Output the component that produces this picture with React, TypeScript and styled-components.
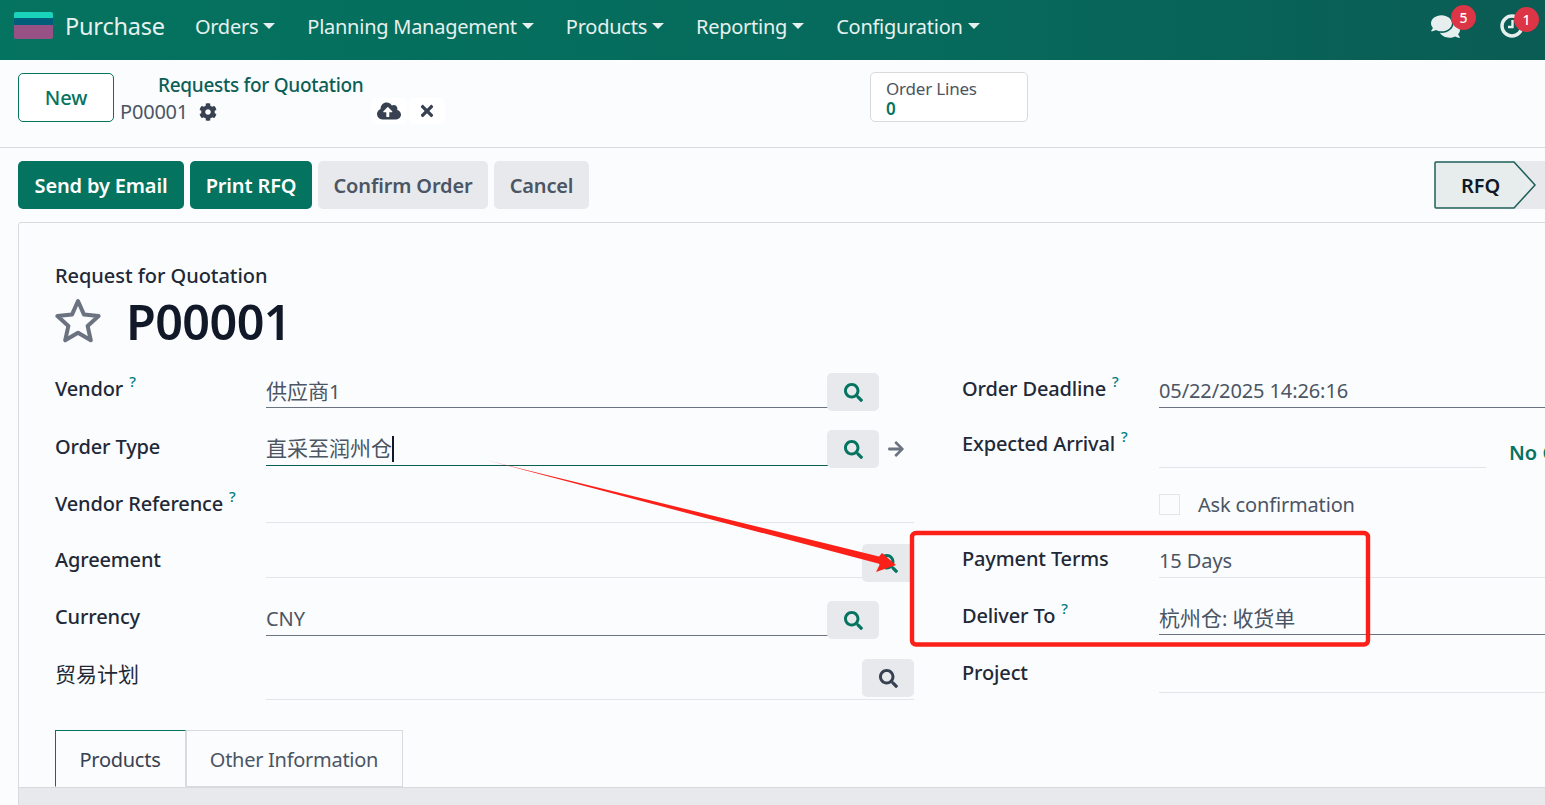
import React from 'react';
import styled, { createGlobalStyle } from 'styled-components';
import {
  FaArrowRight,
  FaCloudUploadAlt,
  FaCog,
  FaComments,
  FaSearch,
  FaTimes,
} from 'react-icons/fa';

const GlobalStyle = createGlobalStyle`
  html, body {
    margin: 0;
    padding: 0;
    background: #f9fafb;
  }
  body {
    font-family: "Noto Sans", "Noto Sans CJK SC", sans-serif;
    color: #1f2937;
  }
`;

const Page = styled.div`
  width: 1545px;
  height: 805px;
  overflow: hidden;
  position: relative;
  background: #fbfcfe;
`;

const NavBar = styled.nav`
  height: 60px;
  box-sizing: border-box;
  display: flex;
  align-items: center;
  padding: 0 0 8px 14px;
  background: linear-gradient(90deg, #04735f 0%, #066a5c 60%, #0a5c54 100%);
  color: #e6f1ef;
`;

const LogoWrap = styled.span`
  display: flex;
  margin-bottom: 2px;
`;

const AppName = styled.span`
  font-size: 23.5px;
  margin-left: 12px;
  margin-right: 30px;
  letter-spacing: -0.2px;
`;

const NavItem = styled.span`
  display: flex;
  align-items: center;
  font-size: 20px;
  letter-spacing: -0.25px;
  margin-right: 32px;
  &::after {
    content: '';
    margin-left: 5px;
    border-top: 6px solid currentColor;
    border-left: 6px solid transparent;
    border-right: 6px solid transparent;
  }
`;

const NavIcons = styled.div`
  margin-left: auto;
  display: flex;
  align-items: center;
  gap: 40px;
  padding-right: 21px;
`;

const NavIcon = styled.span`
  position: relative;
  display: flex;
  font-size: 29px;
  color: #e6eeee;
`;

const Badge = styled.span<{ $left: number }>`
  position: absolute;
  top: -7px;
  left: ${(p) => p.$left}px;
  width: 25px;
  height: 25px;
  border-radius: 50%;
  background: #dc3545;
  color: #fff;
  font-size: 14px;
  font-weight: 500;
  display: flex;
  align-items: center;
  justify-content: center;
`;

const ControlPanel = styled.div`
  height: 88px;
  box-sizing: border-box;
  border-bottom: 1px solid #d8dadd;
  display: flex;
  padding: 12px 18px 0;
`;

const NewButton = styled.button`
  width: 96px;
  height: 49px;
  margin-top: 1px;
  background: #fff;
  border: 1px solid #04735f;
  border-radius: 5px;
  color: #04735f;
  font: 500 20px "Noto Sans", sans-serif;
  letter-spacing: -0.1px;
`;

const Breadcrumbs = styled.div`
  width: 749px;
  padding-left: 7px;
  position: relative;
`;

const Crumb = styled.div`
  margin: 0 0 1px 37px;
  font-size: 19px;
  font-weight: 500;
  letter-spacing: -0.3px;
  line-height: 26px;
  color: #0b5f57;
`;

const CurrentRecord = styled.div`
  display: flex;
  align-items: center;
  font-size: 20px;
  line-height: 26px;
  letter-spacing: -0.2px;
  color: #4b5563;
  margin-left: -1px;
  svg {
    margin-left: 11px;
    color: #374151;
    font-size: 18px;
  }
`;

const SaveActions = styled.div`
  position: absolute;
  left: 257px;
  top: 26px;
  display: flex;
  gap: 2px;
`;

const SaveAction = styled.span<{ $width: number }>`
  width: ${(p) => p.$width}px;
  height: 26px;
  display: flex;
  align-items: center;
  justify-content: center;
  background: #fff;
  border-radius: 5px;
  color: #374151;
  font-size: 20px;
`;

const StatButton = styled.div`
  width: 158px;
  height: 50px;
  box-sizing: border-box;
  border: 1px solid #d8dadd;
  border-radius: 5px;
  background: #fff;
  padding: 5px 15px;
  font-size: 17px;
  line-height: 21px;
  letter-spacing: -0.2px;
  color: #4b5563;
`;

const StatValue = styled.div`
  font-size: 17px;
  line-height: 19px;
  font-weight: 600;
  color: #04735f;
`;

const StatusBar = styled.div`
  height: 74px;
  box-sizing: border-box;
  padding: 13px 0 0 18px;
  display: flex;
  gap: 6px;
`;

const ActionButton = styled.button<{ $primary?: boolean; $width: number }>`
  width: ${(p) => p.$width}px;
  height: 48px;
  border: none;
  border-radius: 5px;
  padding: 0;
  background: ${(p) => (p.$primary ? '#04735f' : '#e7e9ed')};
  color: ${(p) => (p.$primary ? '#fff' : '#4b5563')};
  font: 600 20px "Noto Sans", sans-serif;
  letter-spacing: -0.15px;
`;

const StatusStep = styled.div`
  position: relative;
  margin-left: auto;
  width: 111px;
  height: 48px;
  display: flex;
  align-items: center;
  padding-left: 27px;
  box-sizing: border-box;
  font-size: 20px;
  font-weight: 600;
  color: #111827;
  svg {
    position: absolute;
    left: 0;
    top: 0;
  }
  span {
    position: relative;
  }
`;

const Sheet = styled.div`
  width: 1600px;
  height: 600px;
  margin-left: 18px;
  box-sizing: border-box;
  border: 1px solid #d8dadd;
  border-radius: 3px 0 0 0;
  padding-top: 39px;
  display: flex;
  flex-direction: column;
`;

const SheetHead = styled.div`
  padding-left: 36px;
`;

const RecordKind = styled.div`
  font-size: 20px;
  line-height: 28px;
  font-weight: 500;
  letter-spacing: -0.05px;
  color: #1f2937;
`;

const RecordTitle = styled.h1`
  margin: 0;
  display: flex;
  align-items: center;
  height: 62px;
  font-size: 48.5px;
  font-weight: 600;
  letter-spacing: -0.6px;
  color: #111827;
  svg {
    margin: -3px 24px 0 -1px;
  }
`;

const FormGrid = styled.div`
  display: grid;
  grid-template-columns: 859px 1fr;
  gap: 48px;
  padding-left: 36px;
  margin-top: 21px;
`;

const FormColumn = styled.div`
  display: flex;
  flex-direction: column;
`;

const Row = styled.div<{ $height: number; $label: number }>`
  height: ${(p) => p.$height}px;
  display: grid;
  grid-template-columns: ${(p) => p.$label}px 1fr;
`;

const Label = styled.label<{ $drop?: boolean }>`
  font-size: 20px;
  font-weight: 500;
  letter-spacing: -0.14px;
  color: #1f2937;
  padding-top: ${(p) => (p.$drop ? 3 : 2)}px;
  line-height: 27px;
  sup {
    color: #017e84;
    font-size: 15px;
    font-weight: 500;
    margin-left: 6px;
    line-height: 0;
    position: relative;
    top: -1px;
  }
`;

const PlainLabel = styled(Label)`
  font-weight: 400;
`;

const Cjk = styled.span`
  font-size: 21px;
  letter-spacing: 0;
`;

const ValueCell = styled.div<{ $pad?: number }>`
  display: flex;
  position: relative;
  padding-right: ${(p) => p.$pad ?? 0}px;
`;

const Value = styled.div<{ $focus?: boolean; $faint?: boolean; $height?: number; $endAt?: number }>`
  flex: ${(p) => (p.$endAt ? `0 0 ${p.$endAt}px` : 1)};
  height: ${(p) => p.$height ?? 35}px;
  box-sizing: border-box;
  border-bottom: 1px solid ${(p) => (p.$focus ? '#0b5f57' : p.$faint ? '#e3e5e8' : '#6b7280')};
  font-size: 20px;
  line-height: 34px;
  letter-spacing: -0.1px;
  color: #4b5563;
  padding-top: 1px;
`;

const Caret = styled.span`
  display: inline-block;
  width: 1.5px;
  height: 26px;
  background: #111827;
  vertical-align: -6px;
`;

const SearchButton = styled.span<{ $over?: boolean; $plain?: boolean }>`
  width: 52px;
  height: 38px;
  display: flex;
  align-items: center;
  justify-content: center;
  border-radius: 5px;
  background: #e7e9ed;
  color: ${(p) => (p.$plain ? '#374151' : '#04735f')};
  font-size: 19px;
  ${(p) => (p.$over ? 'position: absolute; right: 0; top: 0;' : 'margin-left: -1px;')}
`;

const OpenLink = styled.span`
  margin: 0 0 0 8px;
  height: 38px;
  display: flex;
  align-items: center;
  font-size: 18px;
  color: #6b7280;
`;

const NoLink = styled.span`
  margin-left: 23px;
  padding-top: 11px;
  line-height: 27px;
  white-space: nowrap;
  font-size: 20px;
  font-weight: 600;
  color: #04735f;
`;

const CheckLine = styled.div`
  display: flex;
  align-items: center;
  gap: 18px;
  font-size: 20px;
  letter-spacing: -0.16px;
  color: #4b5563;
  height: 36px;
`;

const CheckBox = styled.span`
  width: 21px;
  height: 21px;
  border: 1px solid #e3e5e8;
  box-sizing: border-box;
`;

const Tabs = styled.div`
  margin: 14px 0 0 36px;
  height: 57px;
  flex-shrink: 0;
  display: flex;
`;

const Tab = styled.div<{ $active?: boolean; $width: number }>`
  width: ${(p) => p.$width}px;
  box-sizing: border-box;
  display: flex;
  align-items: center;
  justify-content: center;
  padding: 2px 1px 0 0;
  font-size: 20px;
  letter-spacing: -0.28px;
  border: 1px solid #d8dadd;
  color: #4b5563;
  ${(p) =>
    p.$active &&
    'border-color: #04735f #d8dadd transparent #04735f; color: #374151;'}
`;

const TabBody = styled.div`
  flex: 1;
  background: #e7e9ed;
  border-top: 1px solid #d8dadd;
`;

const Markup = styled.svg`
  position: absolute;
  left: 0;
  top: 0;
  pointer-events: none;
`;

const Logo = () => (
  <svg width="39" height="27" viewBox="0 0 39 27">
    <path d="M2 0h35a2 2 0 0 1 2 2v6H0V2a2 2 0 0 1 2-2z" fill="#1ad3bb" />
    <rect y="6" width="39" height="7" fill="#005e7a" />
    <path d="M0 13h39v12a2 2 0 0 1-2 2H2a2 2 0 0 1-2-2z" fill="#985184" />
  </svg>
);

const ClockIcon = () => (
  <svg width="24" height="24" viewBox="0 0 24 24" fill="none" stroke="currentColor">
    <circle cx="12" cy="12" r="10" strokeWidth="3.4" />
    <path d="M12.5 6v7H8" strokeWidth="2.4" />
  </svg>
);

const Star = () => (
  <svg width="48" height="46" viewBox="0 0 48 46" fill="none">
    <path
      d="M24 4l6 13.6 14.6 1.5-11 9.8 3.2 14.4L24 35.8l-12.8 7.5 3.2-14.4-11-9.8L18 17.6z"
      stroke="#6b7280"
      strokeWidth="4"
      strokeLinejoin="round"
    />
  </svg>
);

export default function App() {
  return (
    <Page>
      <GlobalStyle />
      <NavBar>
        <LogoWrap>
          <Logo />
        </LogoWrap>
        <AppName>Purchase</AppName>
        <NavItem>Orders</NavItem>
        <NavItem>Planning Management</NavItem>
        <NavItem>Products</NavItem>
        <NavItem>Reporting</NavItem>
        <NavItem>Configuration</NavItem>
        <NavIcons>
          <NavIcon>
            <FaComments />
            <Badge $left={20}>5</Badge>
          </NavIcon>
          <NavIcon>
            <ClockIcon />
            <Badge $left={14}>1</Badge>
          </NavIcon>
        </NavIcons>
      </NavBar>

      <ControlPanel>
        <NewButton>New</NewButton>
        <Breadcrumbs>
          <Crumb>Requests for Quotation</Crumb>
          <CurrentRecord>
            P00001
            <FaCog />
          </CurrentRecord>
          <SaveActions>
            <SaveAction $width={36}>
              <FaCloudUploadAlt size={24} />
            </SaveAction>
            <SaveAction $width={36}>
              <FaTimes size={18} />
            </SaveAction>
          </SaveActions>
        </Breadcrumbs>
        <StatButton>
          Order Lines
          <StatValue>0</StatValue>
        </StatButton>
      </ControlPanel>

      <StatusBar>
        <ActionButton $primary $width={166}>Send by Email</ActionButton>
        <ActionButton $primary $width={122}>Print RFQ</ActionButton>
        <ActionButton $width={170}>Confirm Order</ActionButton>
        <ActionButton $width={95}>Cancel</ActionButton>
        <StatusStep>
          <svg width="111" height="48" viewBox="0 0 111 48">
            <rect x="80" y="0" width="31" height="48" fill="#e7e9ed" />
            <path
              d="M2 1H80L101 24L80 47H2a1 1 0 0 1-1-1V2a1 1 0 0 1 1-1z"
              fill="#e6edec"
              stroke="#1f5f58"
              strokeWidth="1.5"
            />
          </svg>
          <span>RFQ</span>
        </StatusStep>
      </StatusBar>

      <Sheet>
        <SheetHead>
          <RecordKind>Request for Quotation</RecordKind>
          <RecordTitle>
            <Star />
            P00001
          </RecordTitle>
        </SheetHead>

        <FormGrid>
          <FormColumn>
            <Row $height={57} $label={211}>
              <Label>Vendor<sup>?</sup></Label>
              <ValueCell $pad={35}>
                <Value><Cjk>供应商</Cjk>1</Value>
                <SearchButton><FaSearch /></SearchButton>
              </ValueCell>
            </Row>
            <Row $height={57} $label={211}>
              <Label $drop>Order Type</Label>
              <ValueCell $pad={9}>
                <Value $focus $height={36}><Cjk>直采至润州仓</Cjk><Caret /></Value>
                <SearchButton><FaSearch /></SearchButton>
                <OpenLink><FaArrowRight /></OpenLink>
              </ValueCell>
            </Row>
            <Row $height={57} $label={211}>
              <Label $drop>Vendor Reference<sup>?</sup></Label>
              <ValueCell>
                <Value $faint $height={36} />
              </ValueCell>
            </Row>
            <Row $height={57} $label={211}>
              <Label>Agreement</Label>
              <ValueCell>
                <Value $faint $height={34} />
                <SearchButton $over><FaSearch /></SearchButton>
              </ValueCell>
            </Row>
            <Row $height={58} $label={211}>
              <Label>Currency</Label>
              <ValueCell $pad={35}>
                <Value>CNY</Value>
                <SearchButton><FaSearch /></SearchButton>
              </ValueCell>
            </Row>
            <Row $height={57} $label={211}>
              <PlainLabel><Cjk>贸易计划</Cjk></PlainLabel>
              <ValueCell>
                <Value $faint $height={41} />
                <SearchButton $over $plain><FaSearch /></SearchButton>
              </ValueCell>
            </Row>
          </FormColumn>

          <FormColumn>
            <Row $height={55} $label={197}>
              <Label>Order Deadline<sup>?</sup></Label>
              <ValueCell>
                <Value>05/22/2025 14:26:16</Value>
              </ValueCell>
            </Row>
            <Row $height={58} $label={197}>
              <Label>Expected Arrival<sup>?</sup></Label>
              <ValueCell>
                <Value $faint $endAt={327} $height={40} />
                <NoLink>No Confirmation</NoLink>
              </ValueCell>
            </Row>
            <Row $height={57} $label={197}>
              <span />
              <CheckLine>
                <CheckBox />
                Ask confirmation
              </CheckLine>
            </Row>
            <Row $height={57} $label={197}>
              <Label>Payment Terms</Label>
              <ValueCell>
                <Value $faint>15 Days</Value>
              </ValueCell>
            </Row>
            <Row $height={57} $label={197}>
              <Label>Deliver To<sup>?</sup></Label>
              <ValueCell>
                <Value><Cjk>杭州仓</Cjk>: <Cjk>收货单</Cjk></Value>
              </ValueCell>
            </Row>
            <Row $height={57} $label={197}>
              <Label>Project</Label>
              <ValueCell>
                <Value $faint $height={36} />
              </ValueCell>
            </Row>
          </FormColumn>
        </FormGrid>

        <Tabs>
          <Tab $active $width={131}>Products</Tab>
          <Tab $width={217}>Other Information</Tab>
        </Tabs>
        <TabBody />
      </Sheet>

      <Markup width="1545" height="805" viewBox="0 0 1545 805">
        <rect x="912" y="533" width="456" height="111.5" rx="4" fill="none" stroke="#fb2018" strokeWidth="4.4" />
        <path d="M486 460L879 556.5L882 553L896 565L876 572L880 564z" fill="#fb2018" />
      </Markup>
    </Page>
  );
}
